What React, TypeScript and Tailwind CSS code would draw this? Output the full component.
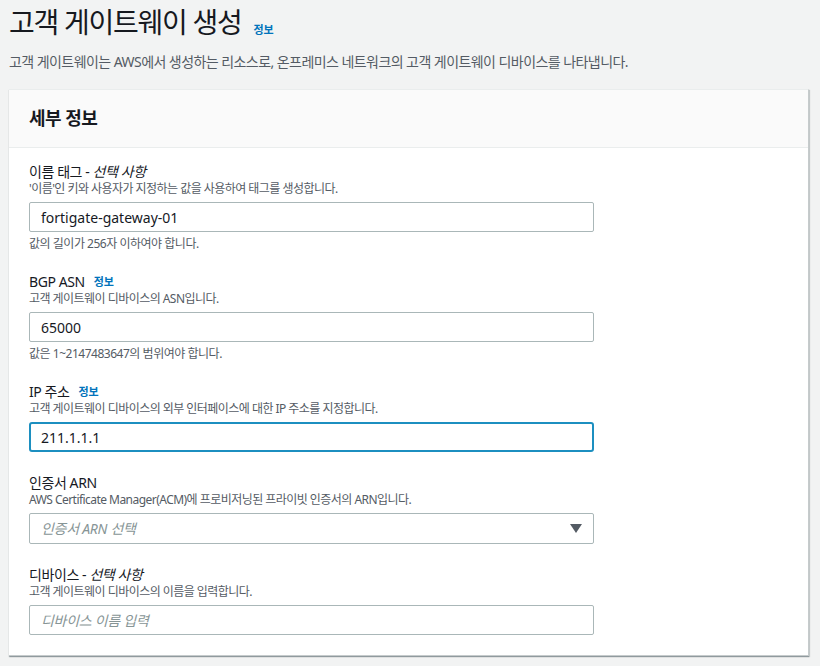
import React from "react";

const font = { fontFamily: '"Noto Sans", "Noto Sans CJK KR", sans-serif' };

function Info() {
  return <span className="ml-[9px] text-[11px] font-bold text-[#0073bb] tracking-[-0.02em]">정보</span>;
}

function Field({
  label,
  optional,
  info,
  desc,
  children,
  hint,
  extraTop,
}: {
  label: string;
  optional?: boolean;
  info?: boolean;
  desc: string;
  children: React.ReactNode;
  hint?: string;
  extraTop?: boolean;
}) {
  return (
    <div className={"flex flex-col" + (extraTop ? " mt-[1px]" : "")}>
      <div className="flex items-center h-[18px] text-[14px] leading-[18px] text-[#16191f] tracking-[-0.03em]">
        <span>
          {label}
          {optional && (
            <>
              {" - "}
              <i>선택 사항</i>
            </>
          )}
        </span>
        {info && <Info />}
      </div>
      <div className="text-[12px] leading-[16px] text-[#545b64] tracking-[-0.045em]">{desc}</div>
      <div className="mt-[5px]">{children}</div>
      {hint && <div className="mt-[4px] text-[12px] leading-[16px] text-[#545b64] tracking-[-0.04em]">{hint}</div>}
    </div>
  );
}

function TextInput({ value, placeholder, focused }: { value?: string; placeholder?: string; focused?: boolean }) {
  return (
    <div
      className={
        "w-[565px] h-[30px] flex items-center bg-white text-[14px] " +
        (focused
          ? "border-2 border-[#1c8fc0] pl-[10px] rounded-[3px]"
          : "border border-[#aab7b8] pl-[11px] rounded-[2px]")
      }
    >
      {value ? (
        <span className="text-[#16191f]">{value}</span>
      ) : (
        <i className="text-[#879596] tracking-[-0.02em]">{placeholder}</i>
      )}
    </div>
  );
}

export default function App() {
  return (
    <div className="min-h-[666px] bg-[#f2f3f3] pl-[9px] pr-[11px] pt-[4px]" style={font}>
      <div className="flex items-end h-[36px]">
        <h1 className="text-[28px] leading-[36px] text-[#16191f] font-normal tracking-[-0.045em]">고객 게이트웨이 생성</h1>
        <span className="ml-[12px] mb-[2px] text-[11px] font-bold text-[#0073bb] tracking-[-0.02em]">정보</span>
      </div>
      <p className="mt-[12px] text-[14px] leading-[20px] text-[#545b64] tracking-[-0.04em]">
        고객 게이트웨이는 AWS에서 생성하는 리소스로, 온프레미스 네트워크의 고객 게이트웨이 디바이스를 나타냅니다.
      </p>
      <div className="mt-[17px] w-[800px] bg-white border-r border-b border-[#c6cbcc] shadow-[0_1px_1px_rgba(0,28,36,0.3),1px_1px_1px_rgba(0,28,36,0.15)] border-t border-t-[#eaeded]">
        <div className="h-[58px] bg-[#fafafa] border-b border-[#eaeded] flex items-center pl-[20px]">
          <h2 className="text-[18px] font-bold text-[#16191f] tracking-[-0.03em]">세부 정보</h2>
        </div>
        <div className="pl-[20px] pt-[15px] pb-[20px] flex flex-col gap-[21px]">
          <Field label="이름 태그" optional desc="'이름'인 키와 사용자가 지정하는 값을 사용하여 태그를 생성합니다." hint="값의 길이가 256자 이하여야 합니다.">
            <TextInput value="fortigate-gateway-01" />
          </Field>
          <Field label="BGP ASN" info desc="고객 게이트웨이 디바이스의 ASN입니다." hint="값은 1~2147483647의 범위여야 합니다.">
            <TextInput value="65000" />
          </Field>
          <Field label="IP 주소" info desc="고객 게이트웨이 디바이스의 외부 인터페이스에 대한 IP 주소를 지정합니다.">
            <TextInput value="211.1.1.1" focused />
          </Field>
          <Field extraTop label="인증서 ARN" desc="AWS Certificate Manager(ACM)에 프로비저닝된 프라이빗 인증서의 ARN입니다.">
            <div className="w-[565px] h-[31px] flex items-center justify-between rounded-[2px] bg-white border border-[#aab7b8] pl-[11px] pr-[11px] text-[14px]">
              <i className="text-[#879596] tracking-[-0.02em]">인증서 ARN 선택</i>
              <svg width="12" height="9" viewBox="0 0 12 9">
                <polygon points="0,0 12,0 6,9" fill="#545b64" />
              </svg>
            </div>
          </Field>
          <Field extraTop label="디바이스" optional desc="고객 게이트웨이 디바이스의 이름을 입력합니다.">
            <TextInput placeholder="디바이스 이름 입력" />
          </Field>
        </div>
      </div>
    </div>
  );
}
